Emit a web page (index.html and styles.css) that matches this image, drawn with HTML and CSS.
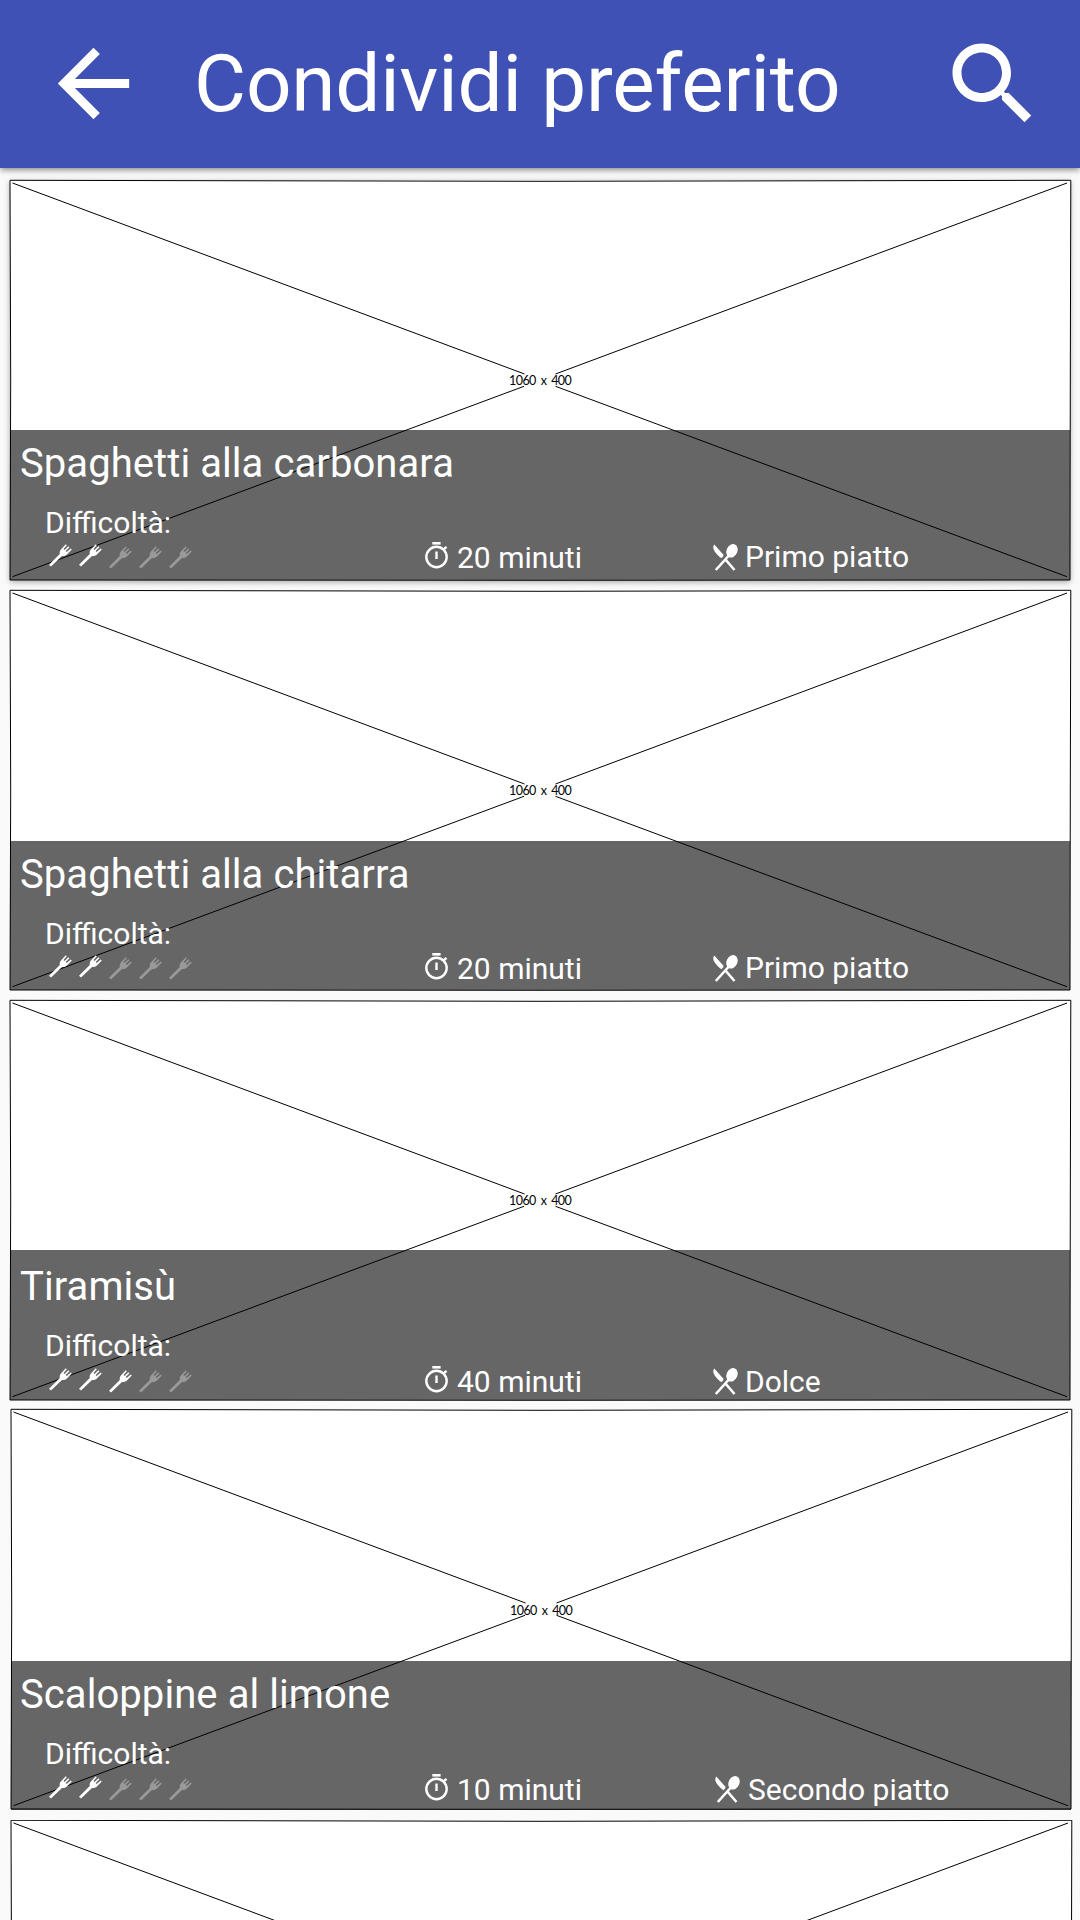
FILE: index.html
```
<!DOCTYPE html>
<html lang="it">
<head>
<meta charset="utf-8">
<title>Condividi preferito</title>
<link rel="stylesheet" href="styles.css">
</head>
<body>
<svg class="sprite" width="0" height="0" aria-hidden="true">
  <symbol id="placeholder" viewBox="0 0 1061 401">
    <path fill="#fff" stroke="#000" d="M0 .3 530 1.3 1060.8 .3 1060.3 200 1060 400 530 400.3 0 400 .7 200Z"/>
    <path fill="none" stroke="#000" d="M2.5 3 514.500 194M545.500 194 1057 3M2.5 396.700 514 206.300M545.500 206.300 1057 396.700"/>
  </symbol>
  <symbol id="fork" viewBox="0 0 23 23">
    <path fill="currentColor" d="M0 20.800 10.800 10C10.300 7.500 11.300 6 12.600 4.700L16.800 .2 17.800 1.200 14.500 5 15.500 6 19.300 2.200 20.400 3.200 16.700 7.100 17.700 8.100 21.700 4.500 22.800 5.600 18.400 10C16.800 11.600 15.200 12.300 13 12L2 22.600Z"/>
  </symbol>
  <symbol id="timer" viewBox="0 0 24 28">
    <path fill="currentColor" d="M7.300 0H15.600V2.600H7.300Z"/>
    <circle cx="11.500" cy="15" r="10.200" fill="none" stroke="currentColor" stroke-width="2.400"/>
    <path fill="none" stroke="currentColor" stroke-width="2.400" d="M11.500 9.500V17M18 8 21.500 4.800"/>
  </symbol>
  <symbol id="cutlery" viewBox="0 0 26 27">
    <path fill="currentColor" d="M1.300 .5 10.400 10.800 10.300 12.300 8.300 14.300C5.500 12 2 8.700 .7 5.500 0 3.700 .2 1.800 1.300 .5Z"/>
    <ellipse cx="19" cy="6.800" rx="5.400" ry="7" transform="rotate(25 19 6.800)" fill="currentColor"/>
    <path fill="none" stroke="currentColor" stroke-width="2.600" d="M2.800 26 16.300 11M12 15 21.500 26"/>
  </symbol>
</svg>

<header class="toolbar">
  <svg class="back" viewBox="0 0 24 24"><path fill="currentColor" d="M20 11H7.830l5.590-5.590L12 4l-8 8 8 8 1.410-1.410L7.830 13H20v-2z"/></svg>
  <h1 class="heading">Condividi preferito</h1>
  <svg class="search" viewBox="0 0 24 24"><path fill="currentColor" d="M15.500 14h-.79l-.28-.27C15.410 12.590 16 11.110 16 9.500 16 5.910 13.090 3 9.500 3S3 5.910 3 9.500 5.910 16 9.500 16c1.610 0 3.090-.59 4.230-1.570l.27.28v.79l5 4.990L20.490 19l-4.990-5zm-6 0C7.010 14 5 11.990 5 9.500S7.010 5 9.500 5 14 7.010 14 9.500 11.990 14 9.500 14z"/></svg>
</header>

<main class="list">
  <article class="card card--raised">
    <svg class="photo"><use href="#placeholder"/></svg>
    <span class="size">1060 x 400</span>
    <div class="caption">
      <h2 class="name">Spaghetti alla carbonara</h2>
      <div class="info">
        <div class="difficulty">Difficoltà:
          <div class="forks"><svg class="on up"><use href="#fork"/></svg><svg class="on up"><use href="#fork"/></svg><svg><use href="#fork"/></svg><svg><use href="#fork"/></svg><svg><use href="#fork"/></svg></div>
        </div>
        <div class="time"><svg class="timer"><use href="#timer"/></svg>20 minuti</div>
        <div class="course"><svg class="cutlery"><use href="#cutlery"/></svg>Primo piatto</div>
      </div>
    </div>
  </article>
  <article class="card card--chitarra">
    <svg class="photo"><use href="#placeholder"/></svg>
    <span class="size">1060 x 400</span>
    <div class="caption">
      <h2 class="name">Spaghetti alla chitarra</h2>
      <div class="info">
        <div class="difficulty">Difficoltà:
          <div class="forks"><svg class="on up"><use href="#fork"/></svg><svg class="on up"><use href="#fork"/></svg><svg><use href="#fork"/></svg><svg><use href="#fork"/></svg><svg><use href="#fork"/></svg></div>
        </div>
        <div class="time"><svg class="timer"><use href="#timer"/></svg>20 minuti</div>
        <div class="course"><svg class="cutlery"><use href="#cutlery"/></svg>Primo piatto</div>
      </div>
    </div>
  </article>
  <article class="card card--tiramisu">
    <svg class="photo"><use href="#placeholder"/></svg>
    <span class="size">1060 x 400</span>
    <div class="caption">
      <h2 class="name">Tiramisù</h2>
      <div class="info">
        <div class="difficulty">Difficoltà:
          <div class="forks"><svg class="on up"><use href="#fork"/></svg><svg class="on up"><use href="#fork"/></svg><svg class="on"><use href="#fork"/></svg><svg><use href="#fork"/></svg><svg><use href="#fork"/></svg></div>
        </div>
        <div class="time"><svg class="timer"><use href="#timer"/></svg>40 minuti</div>
        <div class="course"><svg class="cutlery"><use href="#cutlery"/></svg>Dolce</div>
      </div>
    </div>
  </article>
  <article class="card card--scaloppine">
    <svg class="photo"><use href="#placeholder"/></svg>
    <span class="size">1060 x 400</span>
    <div class="caption">
      <h2 class="name">Scaloppine al limone</h2>
      <div class="info">
        <div class="difficulty">Difficoltà:
          <div class="forks"><svg class="on up"><use href="#fork"/></svg><svg class="on up"><use href="#fork"/></svg><svg><use href="#fork"/></svg><svg><use href="#fork"/></svg><svg><use href="#fork"/></svg></div>
        </div>
        <div class="time"><svg class="timer"><use href="#timer"/></svg>10 minuti</div>
        <div class="course"><svg class="cutlery"><use href="#cutlery"/></svg>Secondo piatto</div>
      </div>
    </div>
  </article>
  <article class="card card--next">
    <svg class="photo"><use href="#placeholder"/></svg>
  </article>
</main>
</body>
</html>
```
FILE: styles.css
```
* { box-sizing: border-box; }

body {
  margin: 0;
  width: 1080px;
  height: 1920px;
  overflow: hidden;
  background: #fafafa;
  color: #fff;
  font-family: Roboto, sans-serif;
}

svg { display: block; flex: none; }
.sprite { position: absolute; }

.toolbar {
  display: flex;
  align-items: flex-start;
  height: 168px;
  padding: 0 33px 0 40px;
  background: #3f51b5;
  box-shadow: 0 2px 6px rgba(0, 0, 0, .45);
}
.back { width: 107px; height: 107px; margin-top: 30px; }
.heading {
  flex: 1;
  margin: 36px 0 0 47px;
  font-size: 80px;
  line-height: 96px;
  font-weight: 400;
  letter-spacing: -.17px;
  white-space: nowrap;
}
.search { width: 108px; height: 108px; margin-top: 30px; }

.list {
  display: flex;
  flex-direction: column;
  gap: 10px;
  padding: 12px 0 0 10px;
}
.card {
  --head: 10px;
  --meta: 35px;
  --course: 34px;
  --forks: 5px;
  position: relative;
  display: flex;
  flex: none;
  align-items: flex-end;
  width: 1060px;
  height: 400px;
}
.card--raised { box-shadow: 0 2px 6px rgba(0, 0, 0, .35); }
.card--chitarra { --shade: 149px; }
.card--tiramisu { --head: 13px; --meta: 36px; --course: 36px; --forks: 6px; }
.card--scaloppine {
  --shade: 149px;
  --meta: 36px;
  --course: 36px;
  --forks: 6px;
  height: 401px;
  margin: -1px 0 0 1px;
}
.card--next {
  height: 100px;
  margin-left: 1px;
  overflow-x: visible;
  overflow-y: clip;
}

.photo {
  position: absolute;
  top: 0;
  left: 0;
  width: 1061px;
  height: 401px;
  overflow: visible;
}
#placeholder { overflow: visible; }
.size {
  position: absolute;
  top: 193px;
  left: 499px;
  color: #000;
  font: 12.5px/16px Lato, sans-serif;
  letter-spacing: -.55px;
  word-spacing: 2.2px;
  white-space: nowrap;
}
.card--scaloppine .size { top: 194px; }

.caption {
  position: relative;
  width: 1060px;
  height: var(--shade, 150px);
  padding: var(--head) 0 0 10px;
  background: rgba(0, 0, 0, .6);
}
.card--scaloppine .caption { padding-left: 9px; }
.name {
  margin: 0 0 17px;
  font-size: 40px;
  line-height: 48px;
  font-weight: 400;
  letter-spacing: .07px;
}
.info {
  display: grid;
  grid-template-columns: 380px 288px 1fr;
  padding-left: 25px;
  font-size: 30px;
  line-height: 36px;
}
.forks { display: flex; gap: 7px; padding: var(--forks) 0 0 4px; color: #999; }
.forks svg { width: 23px; height: 23px; }
.forks .on { color: #fff; }
.forks .up { margin-top: -2px; }
.time, .course { display: flex; align-items: flex-start; }
.time { margin-top: var(--meta); }
.course { margin-top: var(--course); }
.timer { width: 24px; height: 28px; margin: 2px 8px 0 0; }
.cutlery { width: 26px; height: 27px; margin: 5px 6px 0 0; }
.card--tiramisu .cutlery { margin-top: 4px; }
.card--scaloppine .course { padding-left: 2px; }
.card--scaloppine .cutlery { margin: 4px 7px 0 0; }
```
